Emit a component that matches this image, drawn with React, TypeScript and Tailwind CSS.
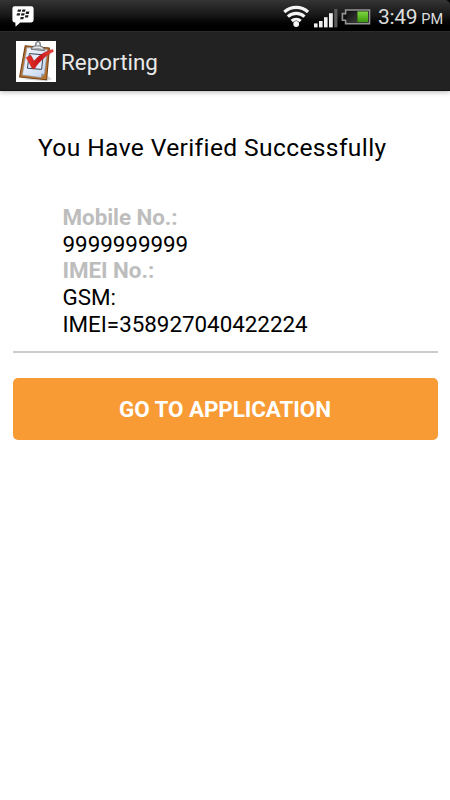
const details = [
  { label: "Mobile No.:", lines: ["9999999999"] },
  { label: "IMEI No.:", lines: ["GSM:", "IMEI=358927040422224"] },
];

function MessengerIcon() {
  return (
    <svg width="23" height="22" viewBox="0 0 23 22">
      <path d="M3 0.2h16.2a2.4 2.4 0 0 1 2.4 2.4v11.4a2.4 2.4 0 0 1-2.4 2.4H8.2L3.6 20.8l-.3-4.4H3A2.4 2.4 0 0 1 .4 14V2.6A2.4 2.4 0 0 1 3 .2z" fill="#fff" />
      <g fill="#1c1c1c">
        <path d="M6 3.5h3.2l-.6 2.3H5.4z" />
        <path d="M10.4 3.5h3.2l-.6 2.3h-3.2z" />
        <path d="M5.1 7.3h3.2l-.6 2.3H4.5z" />
        <path d="M9.5 7.3h3.2l-.6 2.3H8.9z" />
        <path d="M14.2 5.6h3.2l-.6 2.3h-3.2z" />
        <path d="M13.4 9.2h3.2l-.6 2.3h-3.2z" />
        <path d="M8.7 11h3.2l-.6 2.3H8.1z" />
      </g>
    </svg>
  );
}

function WifiIcon() {
  return (
    <svg width="28" height="22" viewBox="0 0 28 22">
      <g fill="none" stroke="#f4f4f4" strokeWidth="3.1">
        <path d="M1.3 7a17.6 17.6 0 0 1 23.8 0" />
        <path d="M4.9 11.7a12 12 0 0 1 16.6 0" />
        <path d="M8.7 16a6.6 6.6 0 0 1 9 0" />
      </g>
      <circle cx="13.2" cy="19" r="2.9" fill="#f4f4f4" />
    </svg>
  );
}

function SignalIcon() {
  return (
    <svg width="24" height="20" viewBox="0 0 24 20">
      <g fill="#eee">
        <rect x="0" y="14.4" width="3.6" height="4" />
        <rect x="5" y="12" width="3.6" height="6.4" />
        <rect x="10" y="8.2" width="3.6" height="10.2" />
        <rect x="15" y="4.2" width="3.8" height="14.2" />
      </g>
      <rect x="20.2" y="0" width="3.2" height="18.4" fill="#5a5a5a" />
    </svg>
  );
}

function BatteryIcon() {
  return (
    <svg width="30" height="16" viewBox="0 0 30 16">
      <defs>
        <linearGradient id="charge" x1="0" y1="0" x2="0" y2="1">
          <stop offset="0" stopColor="#82d545" />
          <stop offset="0.5" stopColor="#5dba24" />
          <stop offset="1" stopColor="#3c9410" />
        </linearGradient>
        <linearGradient id="empty" x1="0" y1="0" x2="1" y2="1">
          <stop offset="0" stopColor="#111" />
          <stop offset="1" stopColor="#3a3a3a" />
        </linearGradient>
      </defs>
      <path d="M4.6 1h23.9v13.6H4.6v-3.4H1.4V4.6h3.2z" fill="#111" stroke="#959595" strokeWidth="1.6" />
      <rect x="6" y="2.6" width="10.4" height="10.4" fill="url(#empty)" />
      <rect x="16.4" y="2.4" width="10.6" height="10.8" fill="url(#charge)" />
    </svg>
  );
}

function ClipboardIcon() {
  return (
    <svg width="40" height="41" viewBox="0 0 40 41" className="shrink-0 bg-white">
      <defs>
        <linearGradient id="paper" x1="0" y1="0" x2="1" y2="1">
          <stop offset="0" stopColor="#f6f8fc" />
          <stop offset="0.6" stopColor="#dae5f4" />
          <stop offset="1" stopColor="#bfd2ec" />
        </linearGradient>
        <linearGradient id="tick" x1="0" y1="0" x2="1" y2="0">
          <stop offset="0" stopColor="#e5352b" />
          <stop offset="0.5" stopColor="#c9151a" />
          <stop offset="1" stopColor="#e84a38" />
        </linearGradient>
      </defs>
      <path d="M5 38 30 40.2l6-2.2-4-3z" fill="#d5d5d5" />
      <path d="M9.2 4.8 33.4 7 30.6 38.8 3.6 36z" fill="#b77431" stroke="#764317" strokeWidth="1.1" strokeLinejoin="round" />
      <path d="M11 6.6 31.4 8.6 28.4 33 24.8 36.4 6.4 34z" fill="url(#paper)" stroke="#8a99b3" strokeWidth=".6" />
      <path d="m24.8 36.4.8-3.8 2.8.4z" fill="#8995a8" />
      <path d="M13.4 12.6 27.2 13.8 25.6 28.4 11.4 27.2z" fill="#e2ebf8" stroke="#3d465a" strokeWidth="1" />
      <path d="M15.2 8.4c.4-2.8 2.3-3.4 4.3-3.7l.3-2.9c.5-1.9 4.2-1.7 4.5.2l.2 3.2c2.4.4 3.9 1.6 4 4.5z" fill="#a9aeb2" stroke="#60666b" strokeWidth=".8" />
      <path d="M17.2 6.9c3-1 6.6-.8 9.4.6" fill="none" stroke="#f0f0f0" strokeWidth="1.1" />
      <circle cx="22" cy="2.9" r="1.1" fill="#fff" />
      <path d="M10.2 16.6 14.9 14.3 18 20C22.5 14.8 29 10 36.8 8.4L37.4 10.6C30 14.6 22.8 20.6 18.6 27.8L16.2 27.6z" fill="url(#tick)" stroke="#a51717" strokeWidth=".4" />
    </svg>
  );
}

function StatusBar() {
  return (
    <div className="flex h-[31px] items-start rounded-tr-[5px] bg-linear-to-b from-[#353535] via-[#171717] via-50% to-black pl-3">
      <div className="pt-[6px]">
        <MessengerIcon />
      </div>
      <div className="ml-[248px] pt-[5px]">
        <WifiIcon />
      </div>
      <div className="ml-[3px] pt-[9px]">
        <SignalIcon />
      </div>
      <div className="ml-[3px] pt-[9px]">
        <BatteryIcon />
      </div>
      <div className="ml-[7px] flex items-baseline whitespace-nowrap leading-[34px] text-[#ddd]">
        <span className="text-[21px] tracking-[-0.3px]">3:49</span>
        <span className="ml-[4px] text-[14.5px]">PM</span>
      </div>
    </div>
  );
}

export default function App() {
  return (
    <div className="h-[800px] w-[450px] overflow-hidden bg-white font-[Roboto,sans-serif]">
      <div className="bg-black">
        <StatusBar />
      </div>
      <header className="flex h-[60px] items-start border-b border-t border-b-[#111] border-t-[#2b2b2b] bg-[#222] pl-[16px] pt-[9px] shadow-[0_1px_5px_rgba(0,0,0,0.3)]">
        <ClipboardIcon />
        <h1 className="ml-[5px] text-[22.4px] leading-[43px] text-[#e8e8e8]">Reporting</h1>
      </header>
      <main className="px-[12.5px]">
        <h2 className="whitespace-nowrap pl-[25.5px] pt-[39px] text-[24.6px] leading-[35px] tracking-[0.37px] text-black">
          You Have Verified Successfully
        </h2>
        <dl className="mt-[39px] pb-[13.5px] pl-[50px] text-[22.4px] leading-[26.7px]">
          {details.map((item) => (
            <div key={item.label}>
              <dt className="font-bold tracking-[-0.05px] text-[#bdbdbd]">{item.label}</dt>
              {item.lines.map((line) => (
                <dd key={line} className="tracking-[-0.02px] text-black">{line}</dd>
              ))}
            </div>
          ))}
        </dl>
        <div className="h-[1.5px] bg-[#ccc]" />
        <button className="mt-[25px] block h-[62.5px] w-full rounded-[5px] bg-[#f99b35] pt-[3px] text-[22.4px] font-bold tracking-[-0.05px] text-white">
          GO TO APPLICATION
        </button>
      </main>
    </div>
  );
}
